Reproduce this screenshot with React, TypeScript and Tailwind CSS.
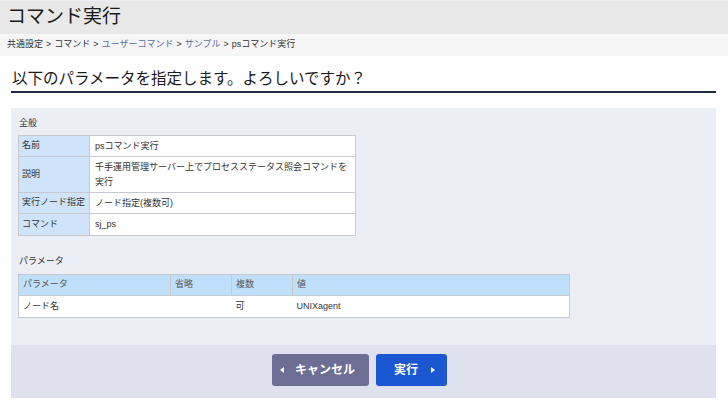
import React from "react";

const font = { fontFamily: '"Liberation Sans", "Noto Sans CJK JP", sans-serif' };

export default function App() {
  const rows: [string, React.ReactNode, string][] = [
    ["名前", "psコマンド実行", "h-[21px]"],
    ["説明", <>千手運用管理サーバー上でプロセスステータス照会コマンドを<br />実行</>, "h-[36px]"],
    ["実行ノード指定", "ノード指定(複数可)", "h-[21px]"],
    ["コマンド", "sj_ps", "h-[22px]"],
  ];
  return (
    <div className="w-[728px] h-[408px] bg-white text-[#222] overflow-hidden" style={font}>
      <div className="h-[34px] bg-[#e8e8e8] flex items-center pl-[7px] text-[19px] text-[#1a1a1a] border-t border-[#eceef3]">
        コマンド実行
      </div>
      <div className="h-[22px] bg-[#f6f6f6] flex items-center pl-[7px] text-[9px] text-[#333] whitespace-nowrap">
        <span>共通設定</span>
        <span className="mx-[3px]">&gt;</span>
        <span>コマンド</span>
        <span className="mx-[3px]">&gt;</span>
        <span className="text-[#5a6e9e]">ユーザーコマンド</span>
        <span className="mx-[3px]">&gt;</span>
        <span className="text-[#5a6e9e]">サンプル</span>
        <span className="mx-[3px]">&gt;</span>
        <span>psコマンド実行</span>
      </div>
      <div className="pl-[11px] pr-[12px]">
        <div className="pt-[12px] pl-[1px] h-[37px] border-b-2 border-[#1f2a44] text-[15.5px] text-[#1a1a1a] leading-[22px]">
          以下のパラメータを指定します。よろしいですか？
        </div>
        <div className="mt-[15px] bg-[#eceef6] pt-[7px] pl-[7px] h-[237px] text-[9px]">
          <div className="pl-[1px] h-[18px] flex items-center text-[#333]">全般</div>
          <table className="mt-[2px] w-[338px] border-collapse bg-white">
            <tbody>
              {rows.map(([k, v, h]) => (
                <tr key={k} className={h}>
                  <td className="w-[71px] p-0 bg-[#cfe4fb] border border-[#c6c9cf] pl-[3px] align-middle whitespace-nowrap text-[#333]">{k}</td>
                  <td className="border p-0 border-[#c6c9cf] pl-[5px] align-middle leading-[15px] whitespace-nowrap text-[#333]">{v}</td>
                </tr>
              ))}
            </tbody>
          </table>
          <div className="mt-[17px] pl-[1px] h-[18px] flex items-center text-[#333]">パラメータ</div>
          <table className="mt-[3px] w-[552px] border-collapse bg-white">
            <tbody>
              <tr className="h-[21px] bg-[#bfdffb] text-[#555]">
                <td className="w-[152px] border border-[#c6c9cf] pl-[4px]">パラメータ</td>
                <td className="w-[61px] border border-[#c6c9cf] pl-[4px]">省略</td>
                <td className="w-[61px] border border-[#c6c9cf] pl-[4px]">複数</td>
                <td className="border border-[#c6c9cf] pl-[4px]">値</td>
              </tr>
              <tr className="h-[22px] text-[#333]">
                <td className="border-y border-l border-[#c6c9cf] pl-[4px]">ノード名</td>
                <td className="border-y border-[#c6c9cf] pl-[4px]"></td>
                <td className="border-y border-[#c6c9cf] pl-[4px]">可</td>
                <td className="border-y border-r border-[#c6c9cf] pl-[4px]">UNIXagent</td>
              </tr>
            </tbody>
          </table>
        </div>
        <div className="h-[53px] bg-[#e0e1ee] flex items-start justify-center pt-[9px] gap-[7px] pr-[8px]">
          <button className="w-[97px] h-[32px] rounded-[3px] bg-[#6c6f93] text-white text-[12px] font-bold flex items-center pl-[8px] gap-[11px]">
            <svg width="4" height="6" viewBox="0 0 4 6"><path d="M4 0 L0 3 L4 6 Z" fill="white" /></svg>
            キャンセル
          </button>
          <button className="w-[71px] h-[32px] rounded-[3px] bg-[#1b57d3] text-white text-[12px] font-bold flex items-center pl-[18px] gap-[13px]">
            実行
            <svg width="4" height="6" viewBox="0 0 4 6"><path d="M0 0 L4 3 L0 6 Z" fill="white" /></svg>
          </button>
        </div>
      </div>
    </div>
  );
}
